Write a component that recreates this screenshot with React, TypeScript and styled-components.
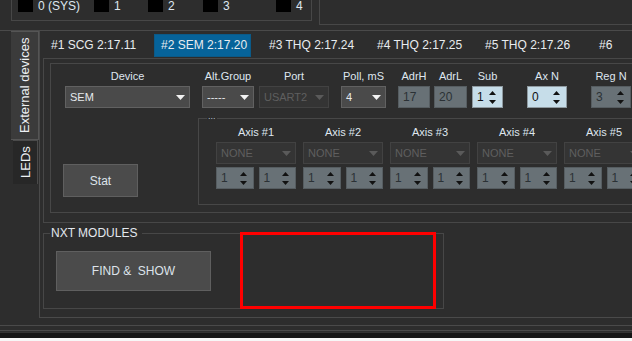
import styled, { createGlobalStyle } from 'styled-components'

const GlobalStyle = createGlobalStyle`
	html, body {
		margin: 0;
		padding: 0;
		background: #f7f7f7;
	}
	body {
		font-family: 'Liberation Sans', Arial, sans-serif;
	}
`

const channels = [
	{ label: '0 (SYS)', w: 76 },
	{ label: '1', w: 54 },
	{ label: '2', w: 55 },
	{ label: '3', w: 73 },
	{ label: '4', w: 20 },
]

const tabs = [
	{ label: '#1 SCG 2:17.11', w: 99 },
	{ label: '#2 SEM 2:17.20', w: 97, active: true },
	{ label: '#3 THQ 2:17.24', w: 97 },
	{ label: '#4 THQ 2:17.25', w: 97 },
	{ label: '#5 THQ 2:17.26', w: 103 },
	{ label: '#6', w: 60 },
]

const DownArrow = ({ color }: { color: string }) => (
	<svg width='9' height='5' viewBox='0 0 9 5'>
		<polygon points='0,0 9,0 4.5,5' fill={color} />
	</svg>
)

const UpDown = () => (
	<svg width='7' height='13' viewBox='0 0 7 13'>
		<polygon points='0,4 7,4 3.5,0' fill='#111' />
		<polygon points='0,9 7,9 3.5,13' fill='#111' />
	</svg>
)

type SelectProps = { value: string; disabled?: boolean }

const Select = ({ value, disabled }: SelectProps) => (
	<SelectBox $disabled={disabled}>
		<span>{value}</span>
		<DownArrow color={disabled ? '#5a5a5a' : '#f2f2f2'} />
	</SelectBox>
)

type SpinProps = { value: string; $light?: boolean; arrows?: boolean }

const Spin = ({ value, $light, arrows = true }: SpinProps) => (
	<SpinBox $light={$light}>
		<span>{value}</span>
		{arrows && <UpDown />}
	</SpinBox>
)

const AxisColumn = ({ n }: { n: number }) => (
	<AxisCol>
		<Label>Axis #{n}</Label>
		<Select value='NONE' disabled />
		<SpinPair>
			<Spin value='1' />
			<Spin value='1' />
		</SpinPair>
	</AxisCol>
)

export default function App() {
	return (
		<Screen>
			<GlobalStyle />
			<TopStrip>
				<ChannelBox>
					{channels.map((c) => (
						<Channel key={c.label} $w={c.w}>
							<Check />
							<span>{c.label}</span>
						</Channel>
					))}
				</ChannelBox>
				<RightBox />
			</TopStrip>
			<Middle>
				<SideTabs>
					<SideTab $active>External devices</SideTab>
					<SideTab>LEDs</SideTab>
				</SideTabs>
				<TabWidget>
					<TabBar>
						{tabs.map((t) => (
							<Tab key={t.label} $w={t.w} $active={t.active}>
								{t.label}
							</Tab>
						))}
					</TabBar>
					<Page>
						<DeviceFrame>
							<DevicePanel>
								<ControlsRow>
									<Field $w={125} $ml={2}>
										<Label>Device</Label>
										<Select value='SEM' />
									</Field>
									<Field $w={52} $ml={12}>
										<Label>Alt.Group</Label>
										<Select value='-----' />
									</Field>
									<Field $w={70} $ml={5}>
										<Label>Port</Label>
										<Select value='USART2' disabled />
									</Field>
									<Field $w={45} $ml={12}>
										<Label>Poll, mS</Label>
										<Select value='4' />
									</Field>
									<Field $w={32} $ml={12}>
										<Label>AdrH</Label>
										<Spin value='17' arrows={false} />
									</Field>
									<Field $w={33} $ml={4}>
										<Label>AdrL</Label>
										<Spin value='20' arrows={false} />
									</Field>
									<Field $w={31} $ml={5}>
										<Label>Sub</Label>
										<Spin value='1' $light />
									</Field>
									<Field $w={40} $ml={24}>
										<Label>Ax N</Label>
										<Spin value='0' $light />
									</Field>
									<Field $w={40} $ml={24}>
										<Label>Reg N</Label>
										<Spin value='3' />
									</Field>
								</ControlsRow>
								<LowerRow>
									<StatArea>
										<Button $w={75} $h={33}>Stat</Button>
									</StatArea>
									<AxisGroup>
										<GroupDots>...</GroupDots>
										{[1, 2, 3, 4, 5].map((n) => (
											<AxisColumn key={n} n={n} />
										))}
									</AxisGroup>
								</LowerRow>
							</DevicePanel>
						</DeviceFrame>
						<NxtRow>
							<NxtGroup>
								<legend>NXT MODULES</legend>
								<Button $w={155} $h={40}>FIND &amp;  SHOW</Button>
							</NxtGroup>
							<Highlight />
						</NxtRow>
					</Page>
				</TabWidget>
			</Middle>
			<Footer>
				<FooterLine />
				<FooterLine />
				<FooterDark />
			</Footer>
		</Screen>
	)
}

const Screen = styled.div`
	width: 632px;
	height: 338px;
	overflow: hidden;
	background: #2d2d2d;
	color: #e1e6ec;
	font-size: 12px;
	display: flex;
	flex-direction: column;
`
const TopStrip = styled.div`
	display: flex;
	align-items: flex-start;
	height: 30px;
	flex: none;
`
const ChannelBox = styled.div`
	margin-left: 11px;
	width: 301px;
	height: 21px;
	box-sizing: border-box;
	border: 1px solid #474747;
	border-top: none;
	padding-left: 6px;
	display: flex;
	align-items: flex-start;
`
const Channel = styled.div<{ $w: number }>`
	width: ${(p) => p.$w}px;
	flex: none;
	display: flex;
	align-items: center;
	gap: 5px;
	height: 12px;
	line-height: 12px;
	font-size: 12px;
	color: #dfe7f0;
	white-space: nowrap;
`
const Check = styled.div`
	width: 15px;
	height: 12px;
	background: #000;
	flex: none;
`
const RightBox = styled.div`
	margin-left: 7px;
	flex: 1;
	height: 24px;
	border-left: 1px solid #474747;
	border-bottom: 1px solid #474747;
`
const Middle = styled.div`
	height: 288px;
	flex: none;
	box-sizing: border-box;
	border-top: 1px solid #4a4a4a;
	padding-left: 11px;
	display: flex;
`
const SideTabs = styled.div`
	width: 28px;
	flex: none;
	display: flex;
	flex-direction: column;
	align-items: flex-start;
`
const SideTab = styled.div<{ $active?: boolean }>`
	box-sizing: border-box;
	width: ${(p) => (p.$active ? 28 : 25)}px;
	height: ${(p) => (p.$active ? 109 : 44)}px;
	margin-left: ${(p) => (p.$active ? 0 : 2)}px;
	background: ${(p) => (p.$active ? '#3b3b3b' : '#272727')};
	border: 1px solid ${(p) => (p.$active ? '#555' : '#4a4a4a')};
	border-top: ${(p) => (p.$active ? '1px solid #555' : 'none')};
	border-right: none;
	writing-mode: vertical-rl;
	transform: rotate(180deg);
	display: flex;
	align-items: center;
	justify-content: center;
	font-size: 13px;
	color: #eef1f4;
	white-space: nowrap;
`
const TabWidget = styled.div`
	flex: 1;
	min-width: 0;
	box-sizing: border-box;
	border-left: 1px solid #4a4a4a;
	border-bottom: 1px solid #4a4a4a;
	display: flex;
	flex-direction: column;
`
const TabBar = styled.div`
	height: 27px;
	flex: none;
	box-sizing: border-box;
	padding: 3px 0 1px 4px;
	display: flex;
	gap: 11px;
`
const Tab = styled.div<{ $w: number; $active?: boolean }>`
	width: ${(p) => p.$w}px;
	flex: none;
	box-sizing: border-box;
	height: 23px;
	line-height: 23px;
	padding-left: 6px;
	white-space: nowrap;
	font-size: 12px;
	color: #e8ecef;
	background: ${(p) => (p.$active ? '#06639a' : 'transparent')};
	border: 1px solid ${(p) => (p.$active ? '#0b5a88' : 'transparent')};
	line-height: 21px;
`
const Page = styled.div`
	flex: 1;
	padding-left: 3px;
	display: flex;
	flex-direction: column;
`
const DeviceFrame = styled.div`
	height: 165px;
	flex: none;
	box-sizing: border-box;
	border: 1px solid #474747;
	border-right: none;
	padding: 4px 0 0 6px;
`
const DevicePanel = styled.div`
	height: 150px;
	box-sizing: border-box;
	border: 1px solid #474747;
	border-right: none;
	padding: 5px 0 0 12px;
	display: flex;
	flex-direction: column;
`
const ControlsRow = styled.div`
	display: flex;
	align-items: flex-end;
`
const Field = styled.div<{ $w: number; $ml: number }>`
	width: ${(p) => p.$w}px;
	margin-left: ${(p) => p.$ml}px;
	flex: none;
	display: flex;
	flex-direction: column;
`
const Label = styled.div`
	font-size: 11px;
	line-height: 15px;
	height: 15px;
	margin-bottom: 2px;
	text-align: center;
	white-space: nowrap;
	color: #dfe6ef;
`
const SelectBox = styled.div<{ $disabled?: boolean }>`
	height: 22px;
	box-sizing: border-box;
	padding: 0 4px 0 4px;
	display: flex;
	align-items: center;
	justify-content: space-between;
	font-size: 11px;
	background: ${(p) => (p.$disabled ? '#343434' : '#4a4a4a')};
	border: 1px solid ${(p) => (p.$disabled ? '#424242' : '#616161')};
	color: ${(p) => (p.$disabled ? '#5f5f5f' : '#e6e9ec')};
	white-space: nowrap;
	overflow: hidden;
`
const SpinBox = styled.div<{ $light?: boolean }>`
	height: 22px;
	box-sizing: border-box;
	padding: 0 6px 0 4px;
	display: flex;
	align-items: center;
	justify-content: space-between;
	font-size: 12px;
	background: ${(p) => (p.$light ? '#c6dde9' : '#687176')};
	border: 1px solid ${(p) => (p.$light ? '#8f9aa0' : '#565d61')};
	color: ${(p) => (p.$light ? '#111' : '#2b3135')};
`
const LowerRow = styled.div`
	margin-top: 10px;
	display: flex;
	align-items: flex-end;
`
const StatArea = styled.div`
	width: 135px;
	flex: none;
	padding-bottom: 8px;
`
const Button = styled.div<{ $w: number; $h: number }>`
	width: ${(p) => p.$w}px;
	height: ${(p) => p.$h}px;
	box-sizing: border-box;
	background: #4b4b4b;
	border: 1px solid #5f5f5f;
	display: flex;
	align-items: center;
	justify-content: center;
	font-size: 12px;
	color: #dde3ea;
	white-space: pre;
`
const AxisGroup = styled.div`
	position: relative;
	flex: 1;
	height: 87px;
	box-sizing: border-box;
	border: 1px solid #474747;
	border-right: none;
	padding: 6px 0 0 17px;
	display: flex;
	gap: 7px;
`
const GroupDots = styled.span`
	position: absolute;
	top: -7px;
	left: 8px;
	font-size: 9px;
	line-height: 8px;
	color: #b8c4d4;
	background: #2d2d2d;
	padding: 0 1px;
`
const AxisCol = styled.div`
	width: 80px;
	flex: none;
	display: flex;
	flex-direction: column;
`
const SpinPair = styled.div`
	margin-top: 3px;
	display: grid;
	grid-template-columns: 1fr 1fr;
	gap: 5px;
`
const NxtRow = styled.div`
	position: relative;
	margin-top: 3px;
	display: flex;
`
const NxtGroup = styled.fieldset`
	margin: 0;
	width: 401px;
	box-sizing: border-box;
	border: 1px solid #474747;
	padding: 11px 0 17px 12px;
	& legend {
		margin-left: -6px;
		padding: 0 5px 0 1px;
		font-size: 12px;
		line-height: 14px;
		color: #e3e8ee;
	}
`
const Highlight = styled.div`
	position: absolute;
	left: 197px;
	top: 6px;
	width: 196px;
	height: 77px;
	box-sizing: border-box;
	border: 3px solid #ff0000;
`
const Footer = styled.div`
	height: 20px;
	flex: none;
	box-sizing: border-box;
	padding-top: 7px;
	display: flex;
	flex-direction: column;
	gap: 4px;
`
const FooterLine = styled.div`
	height: 1px;
	background: #4a4a4a;
	flex: none;
`
const FooterDark = styled.div`
	margin-top: -3px;
	height: 6px;
	border-top: 1px solid #333;
	background: #161616;
	flex: none;
`
